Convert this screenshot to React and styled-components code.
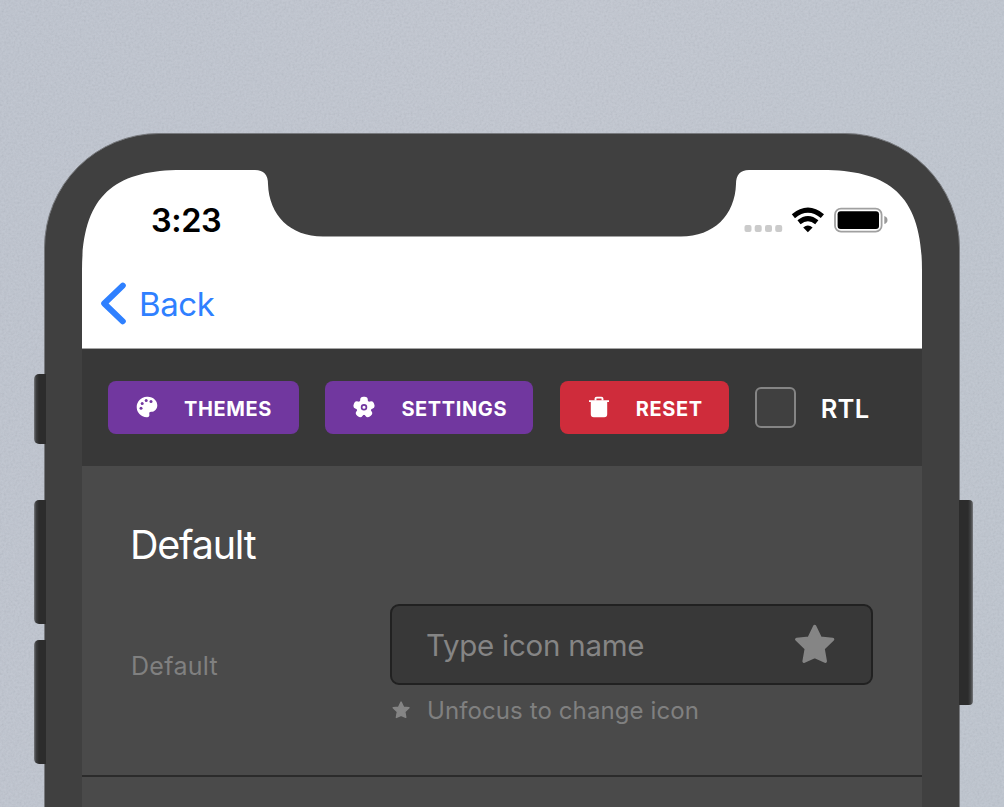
import React from 'react';
import styled, { createGlobalStyle } from 'styled-components';

const GlobalStyle = createGlobalStyle`
  * { box-sizing: border-box; }
  html, body { margin: 0; width: 100%; height: 100%; overflow: hidden; }
  body { background: #bec4ce; font-family: Inter, "Liberation Sans", sans-serif; }
`;

const Backdrop = styled.div`
  position: relative;
  width: 1004px;
  height: 807px;
  padding: 133px 44px 0;
  overflow: hidden;
  background: linear-gradient(100deg, #bcc2cd 0%, #c0c5cf 50%, #bcc3cd 100%);
`;

const Grain = styled.svg`
  position: absolute;
  inset: 0;
  width: 100%;
  height: 100%;
  opacity: 0.08;
`;

const Phone = styled.div`
  position: relative;
  width: 916px;
  height: 900px;
  padding: 36px 37px 0;
  border: 1px solid #77797d;
  border-radius: 115px;
  background: #404040;
`;

const SideButton = styled.div`
  position: absolute;
  top: ${p => p.$top}px;
  ${p => (p.$side === 'left' ? 'left: -11px;' : 'right: -14px;')}
  width: ${p => (p.$side === 'left' ? 12 : 14)}px;
  height: ${p => p.$length}px;
  border-radius: ${p => (p.$side === 'left' ? '5px 0 0 5px' : '0 4px 4px 0')};
  background: linear-gradient(to ${p => (p.$side === 'left' ? 'right, #77797d 0, #3e3f40 2px' : 'left, #77797d 0, #454647 2px')}, #2c2c2c 5px);
`;

const Screen = styled.main`
  width: 840px;
  height: 700px;
  background: #4a4a4a;
  clip-path: path("M0 100 C0 25 33 0 100 0 H173 Q186 0 186 14 C187 45 208 66.5 241 66.5 H599 C632 66.5 653 45 654 14 Q654 0 667 0 H740 C807 0 840 25 840 100 V700 H0 Z");
`;

const Header = styled.header`
  height: 179px;
  background: #fff;
  border-bottom: 1px solid #a5a5a5;
`;

const StatusBar = styled.div`
  display: flex;
  align-items: center;
  justify-content: space-between;
  height: 101px;
  padding: 0 34px 0 69px;
`;

const Clock = styled.span`
  font-size: 32.5px;
  font-weight: 600;
  letter-spacing: -0.4px;
  color: #000;
`;

const NavBar = styled.nav`
  display: flex;
  align-items: center;
  height: 66px;
  padding-left: 18px;
`;

const BackLink = styled.a`
  display: flex;
  align-items: center;
  gap: 11px;
  font-size: 33px;
  letter-spacing: -0.4px;
  color: #2f80ff;
`;

const Toolbar = styled.div`
  display: flex;
  align-items: center;
  height: 117px;
  padding-left: 26px;
  background: #383838;
`;

const Button = styled.button`
  display: flex;
  align-items: center;
  width: ${p => p.$width}px;
  height: 53px;
  margin: 0 26.4px 0 0;
  padding: 2px 0 0 28px;
  gap: 26px;
  border: 0;
  border-radius: 8px;
  background: ${p => (p.$danger ? '#cf2c3b' : '#71379f')};
  color: #fff;
  font: 700 20px Inter, sans-serif;
  letter-spacing: 0.6px;
  white-space: nowrap;
  svg { flex: none; margin-top: -3px; }
`;

const Checkbox = styled.span`
  width: 41px;
  height: 41px;
  border: 2px solid #858585;
  border-radius: 6px;
  background: #404040;
`;

const CheckLabel = styled.label`
  margin: 1px 0 0 24.5px;
  font-size: 25.5px;
  font-weight: 600;
  letter-spacing: 0.3px;
  color: #fff;
`;

const Section = styled.section`
  height: 311px;
  padding: 55px 49px 0;
  border-bottom: 2px solid #2b2b2b;
`;

const Title = styled.h1`
  margin: 0 0 34px -1px;
  font-size: 39.5px;
  font-weight: 400;
  line-height: 49px;
  letter-spacing: -1.25px;
  color: #fff;
`;

const FieldRow = styled.div`
  display: grid;
  grid-template-columns: 259px 483px;
`;

const FieldLabel = styled.div`
  height: 125px;
  line-height: 125px;
  font-size: 25px;
  letter-spacing: 0.3px;
  color: #808080;
`;

const InputBox = styled.div`
  display: flex;
  align-items: center;
  justify-content: space-between;
  height: 81px;
  padding: 0 36px 0 34px;
  border: 2px solid #212121;
  border-radius: 9px;
  background: #383838;
  font-size: 29.5px;
  letter-spacing: -0.25px;
  color: #858585;
`;

const Hint = styled.div`
  display: flex;
  align-items: center;
  gap: 17.5px;
  height: 50px;
  padding-left: 1.5px;
  font-size: 24px;
  letter-spacing: 0.1px;
  color: #808080;
`;

const Indicators = styled.svg`
  flex: none;
  width: 144px;
  height: 28px;
`;

const PaletteIcon = () => (
  <svg width="22" height="22" viewBox="0 0 22 22">
    <path fill="#fff" d="M10.8 .7C17 .2 21.3 4.6 21.3 9.2c0 4-2.8 6.6-6.2 6.6-1.5 0-2 .8-1.8 2.2.4 2-.3 3.5-2.6 3.3C4.8 20.8.7 16.6.7 11S5 1.1 10.8 .7z" />
    <g fill="#71379f">
      <circle cx="5" cy="12.3" r="1.5" />
      <circle cx="6.2" cy="7.6" r="1.5" />
      <circle cx="10.2" cy="4.4" r="1.5" />
      <circle cx="15" cy="5.5" r="1.5" />
    </g>
  </svg>
);

const FlowerIcon = () => (
  <svg width="22" height="22" viewBox="0 0 22 22">
    <g fill="#fff">
      {[0, 72, 144, 216, 288].map(a => (
        <rect key={a} x="7.2" y=".7" width="7.6" height="9" rx="3.2" transform={`rotate(${a} 11 11.4)`} />
      ))}
      <circle cx="11" cy="11.4" r="7.6" />
    </g>
    <circle cx="11" cy="11.2" r="2.4" fill="none" stroke="#71379f" strokeWidth="1.7" />
  </svg>
);

const TrashIcon = () => (
  <svg width="22" height="22" viewBox="0 0 22 22">
    <path d="M7.5 4.6V2.7q0-1.1 1.1-1.1h4.8q1.1 0 1.1 1.1v1.9" fill="none" stroke="#fff" strokeWidth="1.9" />
    <path fill="#fff" d="M1 4.2h20v1.7h-1.8v12.3q0 3-3 3H5.8q-3 0-3-3V5.9H1z" />
  </svg>
);

const StarIcon = ({ size }) => (
  <svg width={size} height={size} viewBox="0 0 42 42">
    <path
      fill="#858585" stroke="#858585" strokeWidth="3.4" strokeLinejoin="round"
      d="M21.2 2.6l5.8 12 12.6 1.2-9.8 9.4 2.3 13L21.2 33.2 10.3 38.2 12.6 25.2 2.8 15.8l12.6-1.2z"
    />
  </svg>
);

const Status = () => (
  <Indicators viewBox="744 207 144 28">
    <g fill="#cbcbcb">
      {[744.5, 754.7, 765, 775.2].map(x => <rect key={x} x={x} y="225" width="7" height="7" rx="2" />)}
    </g>
    <g fill="none" stroke="#000" strokeWidth="5">
      <path d="M793.4 216.2Q808 204.2 822.4 216.2" />
      <path d="M799 222.3Q808 215.1 816.8 222.3" />
    </g>
    <path d="M803.2 227.6Q807.9 223.2 812.6 227.6L807.9 232.2z" />
    <rect x="835" y="208.7" width="46.6" height="23" rx="6" fill="none" stroke="#a0a0a0" strokeWidth="1.8" />
    <rect x="837.6" y="211.3" width="41.4" height="17.8" rx="3" />
    <path d="M884.3 216q3.2 1 3.2 4t-3.2 4z" fill="#9a9a9a" />
  </Indicators>
);

export default function App() {
  return (
    <>
      <GlobalStyle />
      <Backdrop>
        <Grain>
          <filter id="grain">
            <feTurbulence type="fractalNoise" baseFrequency="0.45" numOctaves="2" />
            <feColorMatrix values="1.3 0 0 0 0  1.3 0 0 0 0  1.3 0 0 0 0  0 0 0 0 1" />
          </filter>
          <rect width="100%" height="100%" filter="url(#grain)" />
        </Grain>
        <Phone>
          <SideButton $side="left" $top={240} $length={70} />
          <SideButton $side="left" $top={366} $length={124} />
          <SideButton $side="left" $top={506} $length={124} />
          <SideButton $side="right" $top={366} $length={205} />
          <Screen>
            <Header>
              <StatusBar>
                <Clock>3:23</Clock>
                <Status />
              </StatusBar>
              <NavBar>
                <BackLink>
                  <svg width="28" height="44" viewBox="0 0 28 44">
                    <path d="M22.8 3.6L4.2 21.5l18.6 17.8" fill="none" stroke="#2f80ff" strokeWidth="6" strokeLinecap="round" strokeLinejoin="round" />
                  </svg>
                  Back
                </BackLink>
              </NavBar>
            </Header>
            <Toolbar>
              <Button $width={191}><PaletteIcon />THEMES</Button>
              <Button $width={208}><FlowerIcon />SETTINGS</Button>
              <Button $width={169} $danger><TrashIcon />RESET</Button>
              <Checkbox />
              <CheckLabel>RTL</CheckLabel>
            </Toolbar>
            <Section>
              <Title>Default</Title>
              <FieldRow>
                <FieldLabel>Default</FieldLabel>
                <div>
                  <InputBox><span>Type icon name</span><StarIcon size={41} /></InputBox>
                  <Hint><StarIcon size={18} />Unfocus to change icon</Hint>
                </div>
              </FieldRow>
            </Section>
          </Screen>
        </Phone>
      </Backdrop>
    </>
  );
}
